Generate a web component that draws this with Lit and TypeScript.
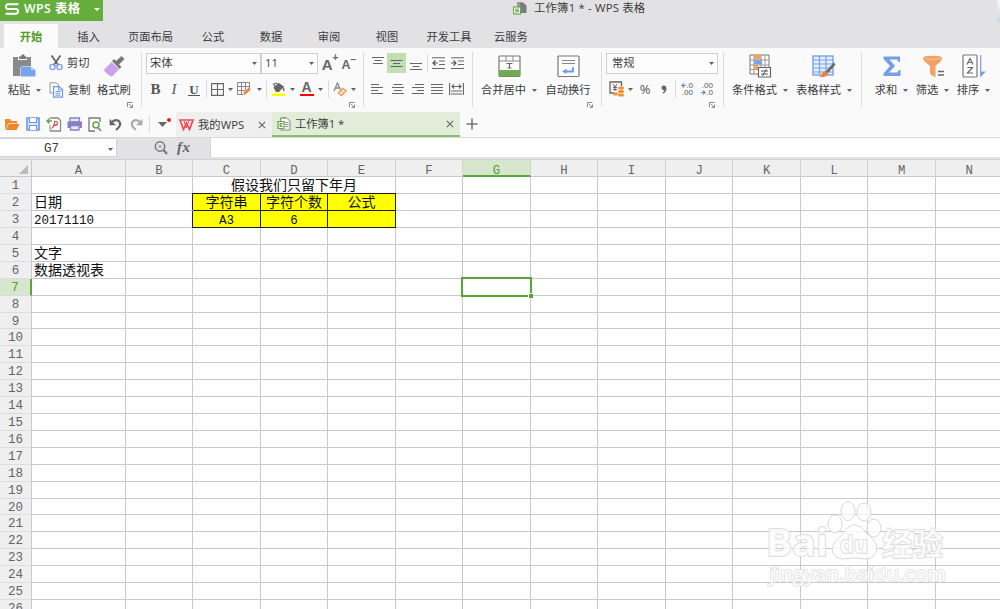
import { LitElement, html, svg, css, nothing } from "lit";
import { customElement } from "lit/decorators.js";
import { classMap } from "lit/directives/class-map.js";

type Part = { w: number; body?: unknown };

const gap = (w: number): Part => ({ w });
const part = (w: number, body: unknown): Part => ({ w, body });

const icon = (w: number, h: number, body: unknown) =>
  html`<svg width=${w} height=${h} viewBox="0 0 ${w} ${h}" fill="none">${body}</svg>`;

const caret = html`<svg width="5" height="3" viewBox="0 0 5 3"><path d="M0 0H5L2.5 3Z" fill="#606060" /></svg>`;
const launcher = html`<svg class="launcher" width="6" height="6" viewBox="0 0 6 6" fill="none"><path d="M.5 5V.5H5.5M2.5 5.5H5.5V2.5M2 2L5 5" stroke="#8a8a8a" /></svg>`;
const divider = html`<i class="divider"></i>`;

const lines = (w: number, rows: [number, number, number][], extra: unknown = nothing, h = 13) =>
  icon(w, h, svg`<path d=${rows.map(([x, y, l]) => `M${x} ${y}h${l}`).join("")} stroke="#666" stroke-width="1.1"/>${extra}`);

const paste = icon(25, 24, svg`<path d="M1 3H6V6H15V3H19V12H10L8 14V22H1Z" fill="#8a8a8a"/><path d="M7 2.5H9L10 .5H12L13 2.5H14.5V5H7Z" fill="#777"/><path d="M8.500 12.500H18L23.500 16V22.500H8.500Z" fill="#78a4ee"/><path d="M19 12.500L23.500 16H19Z" fill="#b4cef8"/>`);
const cut = icon(14, 16, svg`<path d="M2.500 .5L9.500 10.500M11.500 .5L4.500 10.500" stroke="#666" stroke-width="1.800"/><circle cx="3.500" cy="12" r="2.600" stroke="#78a0e4" stroke-width="1.400"/><circle cx="10.500" cy="12" r="2.600" stroke="#78a0e4" stroke-width="1.400"/>`);
const copy = icon(15, 16, svg`<path d="M4 11H1V.8H7.500L9.500 3V4" stroke="#999"/><path d="M4.600 4.600H10L13.500 7.500V15.200H4.600Z" fill="#fff" stroke="#6d98e3" stroke-width="1.200"/><path d="M9.500 5V8H13M6.500 9.500H11.500M6.500 11.300H11.500M6.500 13.200H11.500" stroke="#6d98e3"/>`);
const brush = icon(23, 23, svg`<path d="M9 6L11 4L13 6L18.500 1L21.500 4L16 9.500L18.500 12L16.500 14Z" fill="#777"/><path d="M8.500 7L16 14.300L9 21.500C6 21 3 18 .8 15Z" fill="#caa1ef"/>`);
const bordersIcon = icon(13, 13, svg`<path d="M.6.6H12.400V12.400H.6ZM6.500 1V12M1 6.500H12" stroke="#666" stroke-width="1.100"/>`);
const tablePen = icon(14, 14, svg`<path d="M.5.5H12.500V6M.5.5V12.500H6M.5 4.500H12.500M.5 8.500H8M4.500.5V12.500M8.500.5V8" stroke="#888"/><path d="M6 13L7 10L12 5.500L13.800 7.500L9 12Z" fill="#ee803a"/>`);
const bucket = icon(15, 15, svg`<path d="M2.500 5.500L7.500 .8L13 4.500L8 10H5Z" fill="#666"/><path d="M4 4.500L2.500 2L6 1" stroke="#666" stroke-width="1.200"/><path d="M12 4.500Q14.500 7.500 13 9.500Q11.500 8.500 11.500 5Z" fill="#666"/><path d="M.5 11.500H14.500V14H.5Z" fill="#ff0"/>`);
const fontColor = html`<span class="font-color">A</span>`;
const eraser = icon(14, 15, svg`<path d="M1 9L4.500 1L7.500 8M2.500 6H6" stroke="#888" stroke-width="1.300"/><path d="M5.500 11L10 6.500L13 9L8.500 13.500Z" stroke="#eea04d" stroke-width="1.500"/><path d="M8 8.500L11 11" stroke="#eea04d"/>`);

const vTop = lines(13, [[0, 1.5, 12], [2.5, 4.500, 7], [1, 7.500, 10]], nothing, 15);
const vMid = lines(13, [[0.5, 3.500, 12], [3, 6.500, 7], [0.500, 9.500, 12]]);
const vBot = lines(13, [[1, 7.500, 12], [3.500, 10.500, 7], [1, 13.500, 12]], nothing, 15);
const outdent = lines(13, [[0, .8, 13], [7, 4, 6], [7, 7.500, 6], [0, 11.500, 13]], svg`<path d="M1 6H6M3.500 3.500L1 6L3.500 8.500" stroke="#555" stroke-width="1.200"/>`);
const indent = lines(13, [[0, .8, 13], [7, 4, 6], [7, 7.500, 6], [0, 11.500, 13]], svg`<path d="M0 6H5M2.500 3.500L5 6L2.500 8.500" stroke="#555" stroke-width="1.200"/>`);
const hLeft = lines(12, [[0, 1.500, 8], [0, 4.500, 12], [0, 7.500, 7], [0, 10.500, 12]], nothing, 12);
const hCenter = lines(12, [[1.500, 1.500, 9], [0, 4.500, 12], [2, 7.500, 8], [0, 10.500, 12]], nothing, 12);
const hRight = lines(12, [[3, 1.500, 9], [0, 4.500, 12], [5, 7.500, 7], [0, 10.500, 12]], nothing, 12);
const hJust = lines(12, [[0, 1.500, 12], [0, 4.500, 12], [0, 7.500, 12], [0, 10.500, 12]], nothing, 12);
const hDist = lines(15, [[2, 8, 11], [2, 11, 11]], svg`<path d="M.6 0V12M14.400 0V12M3 3.500H12M5 1.500L3 3.500L5 5.500M10 1.500L12 3.500L10 5.500" stroke="#666" stroke-width="1.100"/>`, 12);

const mergeIcon = icon(23, 23, svg`<rect x="1" y="1" width="21" height="20.500" rx="1" fill="#fff" stroke="#777" stroke-width="1.200"/><path d="M1 6H22M8 1V6M15 1V6" stroke="#888"/><path d="M1 15H22V21.500H1Z" fill="#72a955"/><path d="M8.500 8.500H14.500M11.500 8.500V13M9.500 13H13.500" stroke="#666" stroke-width="1.200"/>`);
const wrapIcon = icon(23, 23, svg`<rect x="1" y="1" width="21" height="20.500" rx="1" fill="#fff" stroke="#777" stroke-width="1.200"/><path d="M5 5.500H18M5 8.500H18" stroke="#888"/><path d="M16 12V16.500H8" stroke="#6f9ceb" stroke-width="1.800"/><path d="M9.500 13.500V19L5 16.500Z" fill="#6f9ceb"/>`);
const currency = icon(16, 16, svg`<path d="M5 12H1V1H12.500V5" stroke="#666" stroke-width="1.300"/><path d="M4 3L6 6L8 3M6 6V10M4 6.500H8M4 8.500H8" stroke="#666"/><g fill="#f0932f"><rect x="9" y="5.500" width="6" height="3" rx="1.500"/><rect x="9" y="9" width="6" height="3" rx="1.500"/><rect x="9" y="12.500" width="6" height="3" rx="1.500"/><rect x="4" y="11.500" width="5" height="3" rx="1.500"/></g>`);
const comma = icon(6, 9, svg`<path d="M3 .5A2.300 2.300 0 1 0 3.500 5Q3.200 6.700 1.500 7.500L2 8.500Q5.500 7 5.500 3.200Q5.400 .6 3 .5Z" fill="#666"/>`);
const arrow = (left: boolean) => icon(5, 5, svg`<path d=${left ? "M5 2.5H1M3 .5L1 2.500L3 4.500" : "M0 2.500H4M2 .5L4 2.500L2 4.500"} stroke="#5b8fe6" stroke-width="1.200"/>`);
const condIcon = icon(23, 24, svg`<path d="M1 1H20V20H1Z" fill="#fff" stroke="#777"/><path d="M5 1V20M12 1V20M16 1V20M1 6H20M1 11H20M1 15.500H20" stroke="#999"/><path d="M5 1H12V5.500H5ZM5 11H9V15.500H5Z" fill="#f3a15c"/><path d="M5 6H13V10.500H5Z" fill="#78a4ee"/><path d="M9.500 13.500H21.500V23H9.500Z" fill="#fff" stroke="#666" stroke-width="1.200"/><path d="M12 17H19M12 20H19M17.500 14.800L13.500 22" stroke="#555"/>`);
const styleIcon = icon(24, 23, svg`<rect x="1" y="1" width="20" height="19" fill="#e7effd" stroke="#6e99e8" stroke-width="1.300"/><path d="M1 5H21M1 9H21M1 13H21M1 17H21M7.500 1V20M14 1V20" stroke="#76a0e9" stroke-width="1.200"/><path d="M22 7.500L14 16L16 18L23.500 9.500Z" fill="#666"/><path d="M13 16L16.500 18.500Q14 23 7 22Q10 21 10 18.500Q11 16 13 16Z" fill="#ee8038"/>`);
const sumIcon = icon(18, 22, svg`<path d="M.5 1.500H17V7H15.500L14 4.500H6.500L12 11L6 17.500H14.500L16 15H17.500V21H.5V18.500L7 11L.5 4Z" fill="#749fe8"/>`);
const filterIcon = icon(22, 23, svg`<path d="M1 3Q1 .8 10.500 .8Q20 .8 20 3L19 6L13.500 11V22Q9 21 8 18V11L2 6Z" fill="#f1a264"/><path d="M3 3.500Q10 5.500 18 3.500" stroke="#fac497"/><path d="M16 16.500H22M16 20H22" stroke="#666" stroke-width="1.300"/>`);
const sortIcon = icon(24, 24, svg`<rect x="1" y="1" width="14" height="22" rx="1" fill="#fff" stroke="#777" stroke-width="1.200"/><path d="M5 10.500L8 4.500L11 10.500M6 8.500H10M5.500 13.500H10.500L5.500 19H11" stroke="#666" stroke-width="1.200"/><path d="M18.700 1V22L22.500 18H18.700" fill="#749fe8" stroke="#749fe8" stroke-width="1.200"/>`);

const folder = icon(16, 14, svg`<path d="M1 12V2H6L7.500 4H13V6.500H4.500L1.500 12.500Z" fill="#ef8a30"/><path d="M4.500 7H15.500L12.500 13H1.500Z" fill="#f0862b"/><path d="M1.500 12.500L4.500 6.500H13.500" stroke="#fde0c2" stroke-width=".8"/>`);
const save = icon(14, 14, svg`<path d="M1 1H13V13H1Z" fill="#dce8fc" stroke="#6996e5" stroke-width="1.600"/><path d="M3.500 1V5.500H10.500V1M3.500 13V8.500H10.500V13" fill="#fff" stroke="#6996e5" stroke-width="1.200"/>`);
const pdf = icon(16, 15, svg`<path d="M4 1H12L14.500 3.500V14H4" fill="#fff" stroke="#888" stroke-width="1.300"/><path d="M4 8V14" stroke="#888"/><path d="M5.500 11.500Q9 9 8.500 4.500Q12 4 11.500 7Q10 9 7 8.500" stroke="#dc5556" stroke-width="1.300"/><path d="M1 4H6M3.500 1.500L1 4L3.500 6.500" stroke="#63a04d" stroke-width="1.400"/>`);
const printer = icon(16, 14, svg`<path d="M3 1H12.500V5H3ZM3.500 8.500H12V13H3.500Z" fill="#e9e7fb" stroke="#8580c6" stroke-width="1.300"/><path d="M.5 4.500H15V11H12.500V8H3V11H.5Z" fill="#8580c6"/>`);
const preview = icon(14, 15, svg`<path d="M12 5V1H1V14H7" fill="#fff" stroke="#777" stroke-width="1.300"/><circle cx="8" cy="8" r="3" fill="#fff" stroke="#66a052" stroke-width="1.500"/><path d="M10 10.500L13 14" stroke="#66a052" stroke-width="1.700"/>`);
const undo = icon(13, 13, svg`<path d="M2 5Q6 .8 9.800 3Q13.500 7 7 12" stroke="#666" stroke-width="2.200"/><path d="M.6 .8V7.200H7Z" fill="#666"/>`);
const redo = icon(13, 13, svg`<path d="M11 5Q7 .8 3.200 3Q-.5 7 6 12" stroke="#aaa" stroke-width="2.200"/><path d="M12.400 .8V7.200H6Z" fill="#aaa"/>`);
const close = icon(8, 8, svg`<path d="M.8.8L7.200 7.200M7.200.8L.8 7.200" stroke="#666" stroke-width="1.100"/>`);
const bookIcon = icon(14, 14, svg`<path d="M5 .8H9.500L13 4V13H3" fill="#f7f7f7" stroke="#888"/><path d="M3.500 4V1H9" stroke="#888"/><path d="M8 5.500H11.500M8 7.500H11.500M8 9.500H11.500" stroke="#999"/><path d="M1 4.500H7V11.500H1Z" fill="#fff" stroke="#62a342" stroke-width="1.200"/><path d="M5.500 6.500H3V9.500H5.500M3 8H5" stroke="#62a342"/>`);
const wpsW = icon(15, 12, svg`<path d="M1 1H14L10.500 10.500L7.500 4L4.500 10.500Z" stroke="#ea4b50" stroke-width="1.700"/><path d="M5 2L7.500 9M10 2L7 9" stroke="#ea4b50" stroke-width="1"/>`);
const logo = icon(14, 12, svg`<path d="M13.500 1.200H3Q1 1.200 1 3.500Q1 6 3 6H11Q13 6 13 8.300Q13 10.700 11 10.700H.5" stroke="#fff" stroke-width="1.900"/>`);
const docIcon = icon(15, 14, svg`<path d="M4 1H10V10H4Z" fill="#999"/><path d="M7 2H11.500L13.500 4V12H7Z" fill="#7d7d7d"/><path d="M11 1.500L14 4.500" stroke="#fff" stroke-width=".7"/><rect x=".5" y="6" width="7" height="7" fill="#fff" stroke="#68a94c" stroke-width="1.200"/><path d="M6 8H2.500V9.500H5.500V11H2" stroke="#68a94c"/>`);
const magnifier = icon(14, 14, svg`<circle cx="6" cy="5.500" r="4.700" stroke="#777" stroke-width="1.500"/><path d="M9.500 9L13 13" stroke="#777" stroke-width="2"/><path d="M4.500 4L7.500 7M7.500 4L4.500 7" stroke="#999"/>`);

const COLS = "ABCDEFGHIJKLMN".split("");
const ROWS = Array.from({ length: 26 }, (_, i) => i + 1);
const CELLS: Record<string, string> = {
  C1: "假设我们只留下年月",
  A2: "日期", C2: "字符串", D2: "字符个数", E2: "公式",
  A3: "20171110", C3: "A3", D3: "6",
  A5: "文字", A6: "数据透视表",
};

@customElement("sheet-grid")
class SheetGrid extends LitElement {
  static styles = css`
    :host { display: block; overflow: hidden; position: relative; }
    .grid {
      display: grid; width: 1004px; background: #fff;
      grid-template-columns: 32px 93.7px repeat(13, 67.52px);
      grid-template-rows: 17.3px; grid-auto-rows: 16.91px;
      font: 14px/19px "Liberation Mono", "Noto Sans CJK SC", monospace; color: #111;
    }
    .grid > div { box-sizing: border-box; border-right: 1px solid #c9c9cb; border-bottom: 1px solid #c9c9cb; white-space: nowrap; min-width: 0; }
    .grid > .head { background: #efeff0; color: #646464; text-align: center; font: 12.3px/19.5px "Liberation Mono", monospace; }
    .grid > .colhead { line-height: 22px; border-right-color: #d2d2d4; }
    .grid > .on { background: #d7e7ce; color: #4f9f2f; }
    .grid > .colhead.on { border-bottom: 2px solid #5ba53a; }
    .grid > .rowhead { border-bottom-color: #dcdcde; font-size: 12.5px; }
    .grid > .rowhead.on { border-right: 2px solid #5ba53a; }
    .corner { display: flex; justify-content: flex-end; align-items: flex-end; padding: 0 3px 2px; }
    .text { padding-left: 2px; }
    .num { font-size: 12.5px; line-height: 20px; }
    .center { text-align: center; }
    .grid > .title { grid-column: span 3; }
    .grid > .yellow { background: #ff0; border-color: #1d1d00; text-align: center; box-shadow: -1px 0 #1d1d00; }
    .grid > .yellow.first { box-shadow: -1px -1px #1d1d00, 0 -1px #1d1d00; }
    .grid > .selected { position: relative; border-color: transparent; overflow: visible; }
    .ring { position: absolute; inset: -2px -2px -2px -2px; border: 2px solid #57a532; box-sizing: border-box; }
    .handle { position: absolute; right: -3px; bottom: -4px; width: 4px; height: 4px; background: #57a532; border: 1px solid #fff; border-right: 0; }
    .mark { position: absolute; left: 762px; top: 338px; }
    .mark text { fill: #fff; fill-opacity: .8; stroke: #dedede; stroke-width: 1.800px; stroke-linejoin: round; paint-order: stroke; font-weight: bold; }
    .latin { font-family: "Open Sans", sans-serif; }
    .mark .url { font-weight: 600; stroke-width: 1.400px; }
    .cjk { font-family: "Noto Sans CJK SC", sans-serif; font-weight: 900; }
  `;

  cell(col: string, row: number) {
    const key = col + row;
    if (row === 1 && (col === "D" || col === "E")) return nothing;
    const value = CELLS[key] ?? "";
    const yellow = (row === 2 || row === 3) && "CDE".includes(col);
    const selected = key === "G7";
    return html`<div class=${classMap({
      text: col === "A", num: /^[A-Z0-9]+$/.test(value), yellow, first: yellow && row === 2,
      title: key === "C1", center: key === "C1", selected,
    })}>${value}${selected ? html`<span class="ring"></span><span class="handle"></span>` : nothing}</div>`;
  }

  render() {
    return html`
      <div class="grid">
        <div class="head corner"><svg width="9" height="9" viewBox="0 0 9 9"><path d="M9 0V9H0Z" fill="#bcbcbe" /></svg></div>
        ${COLS.map((c) => html`<div class=${classMap({ head: true, colhead: true, on: c === "G" })}>${c}</div>`)}
        ${ROWS.map((r) => html`<div class=${classMap({ head: true, rowhead: true, on: r === 7 })}>${r}</div>${COLS.map((c) => this.cell(c, r))}`)}
      </div>
      <svg class="mark" width="190" height="92" viewBox="0 0 190 92">
        <text class="latin" x="4" y="58" font-size="38" textLength="62" lengthAdjust="spacingAndGlyphs">Bai</text>
        <g fill="#fff" fill-opacity=".8" stroke="#d9d9d9" stroke-width="1">
          <ellipse cx="73" cy="26" rx="7" ry="9" /><ellipse cx="86" cy="13" rx="7" ry="9.500" />
          <ellipse cx="102" cy="14" rx="7" ry="9" /><ellipse cx="112" cy="30" rx="7" ry="9" />
          <path d="M92 27Q99 27 104 35Q115 43 115 51Q113 61 103 61L92 60L80 61Q70 59 70 51Q71 44 80 37Q86 27 92 27Z" />
        </g>
        <text class="latin" x="78" y="55" font-size="24" textLength="28" lengthAdjust="spacingAndGlyphs">du</text>
        <text class="cjk" x="120" y="57" font-size="31" textLength="61" lengthAdjust="spacingAndGlyphs">经验</text>
        <text class="latin url" x="7" y="83" font-size="19" textLength="177" lengthAdjust="spacingAndGlyphs">jingyan.baidu.com</text>
      </svg>`;
  }
}

@customElement("app-root")
class AppRoot extends LitElement {
  static styles = css`
    :host { display: flex; flex-direction: column; width: 1000px; height: 609px; overflow: hidden; background: #e2e2e4;
      font: 11.25px/16px "Open Sans", "Noto Sans CJK SC", sans-serif; color: #3c3c3c; }
    * { box-sizing: border-box; }
    svg { display: block; flex: none; }
    .title { height: 24px; display: flex; align-items: flex-start; flex: none; }
    .brand { width: 103px; height: 21px; background: #65ad3c; display: flex; align-items: center; padding: 0 0 4px 5px; color: #fff; font-weight: 600; font-size: 12.3px; }
    .brand span { margin-left: 5px; width: 66px; white-space: nowrap; letter-spacing: .45px; }
    .brand .drop { border: 3px solid transparent; border-top-color: #fff; border-bottom: 0; margin-left: 4px; margin-top: 1px; }
    .doc { display: flex; align-items: center; gap: 6px; margin-left: 410px; height: 16px; font-size: 11.4px; letter-spacing: .17px; white-space: nowrap; }
    .edge { margin-left: auto; width: 3px; height: 22px; background: linear-gradient(#f3f7f8, #c9dbe0); }
    .tabs { height: 24px; display: flex; flex: none; white-space: nowrap; }
    .tab { display: flex; align-items: center; justify-content: center; padding-top: 2px; flex: none; }
    .tab.on { background: #fbfbfb; color: #4f9a2a; font-weight: bold; }
    .ribbon { height: 63px; display: flex; background: #fafafa; flex: none; white-space: nowrap; overflow: hidden; }
    .group { position: relative; flex: none; padding-top: 4px; }
    .group + .group::before { content: ""; position: absolute; left: 0; top: 4px; height: 55px; border-left: 1px solid #dedede; }
    .row { display: flex; align-items: center; height: 22px; }
    .row + .row { margin-top: 4px; }
    .item { flex: none; display: flex; align-items: center; justify-content: center; height: 22px; }
    .bigs { display: flex; padding-top: 2px; }
    .big { display: flex; flex-direction: column; align-items: center; flex: none; }
    .big .pic { height: 24px; display: flex; align-items: center; }
    .big .cap { height: 24px; display: flex; align-items: center; gap: 6px; }
    .stack { display: flex; flex-direction: column; gap: 5px; }
    .stack div { display: flex; align-items: center; gap: 4px; height: 22px; }
    .launcher { position: absolute; right: 8px; bottom: 3px; }
    .divider { width: 1px; height: 18px; background: #dcdcdc; }
    .select { width: 100%; height: 21px; border: 1px solid #cfcfcf; background: #fdfdfd; display: flex; align-items: center; justify-content: space-between; padding: 0 3px; }
    .wide { padding-left: 5px; }
    .bold { font: bold 15px "Liberation Serif", serif; color: #555; }
    .italic { font: italic 15px "Liberation Serif", serif; color: #555; }
    .under { font: bold 13px/13px "Liberation Serif", serif; color: #555; border-bottom: 1px solid #555; height: 13px; padding: 0 1px; }
    .letter { font: bold 15px "Liberation Sans", sans-serif; color: #666; display: flex; padding-top: 2px; }
    .letter.small { font-size: 12.5px; padding-top: 3px; }
    .letter sup { font-size: 10px; line-height: 6px; margin: -1px 0 0 0; }
    .font-color { font: bold 14px/11px "Liberation Sans", sans-serif; color: #666; border-bottom: 2.500px solid #f00; width: 14px; height: 14px; text-align: center; }
    .active { background: #c2dfb4; width: 19px; height: 20px; display: flex; align-items: center; justify-content: center; }
    .percent { font-size: 13px; color: #555; }
    .dec { font: 8px/7.500px "Liberation Sans", sans-serif; color: #555; }
    .dec div { display: flex; align-items: center; justify-content: flex-end; }
    .files { height: 26px; display: flex; align-items: center; background: #fafafa; flex: none; white-space: nowrap; }
    .file { height: 25px; display: flex; align-items: center; align-self: flex-start; flex: none; }
    .home { width: 96px; background: #efeff0; padding-left: 3px; margin-top: 1px; }
    .home span { margin-left: 4px; width: 60px; letter-spacing: .1px; }
    .book { width: 188px; background: #e1edd9; border-bottom: 2px solid #8bbd70; padding: 0 6px 0 5px; margin-top: 1px; }
    .book span { margin-left: 4px; flex: 1; }
    .menu { position: relative; display: flex; }
    .dot { position: absolute; right: -4px; top: -4px; width: 4px; height: 4px; border-radius: 50%; background: #f02020; }
    .formula { height: 23px; display: flex; background: #e2e2e4; border-top: 1px solid #d9d9db; padding-bottom: 2px; border-bottom: 1px solid #cfcfd1; flex: none; }
    .name { width: 117px; background: #fff; border: 1px solid #d4d4d6; border-left: 0; display: flex; align-items: center; padding: 3px 3px 0 44px; justify-content: space-between; font: 12.5px "Liberation Mono", monospace; }
    .tools { width: 93px; display: flex; align-items: center; padding-left: 37px; gap: 9px; }
    .fx { font: italic bold 15px "Liberation Serif", serif; color: #666; letter-spacing: .5px; }
    .input { flex: 1; background: #fff; border-left: 1px solid #d4d4d6; }
    sheet-grid { flex: 1; min-height: 0; }
  `;

  row(parts: Part[]) {
    return html`<div class="row">${parts.map((p) => html`<div class="item" style="width:${p.w}px">${p.body ?? nothing}</div>`)}</div>`;
  }

  big(w: number, pic: unknown, label: string, drop = true) {
    return html`<div class="big" style="width:${w}px"><div class="pic">${pic}</div><div class="cap">${label}${drop ? caret : nothing}</div></div>`;
  }

  render() {
    const tabs: [string, number][] = [["插入", 61], ["页面布局", 63], ["公式", 62], ["数据", 54], ["审阅", 62], ["视图", 54], ["开发工具", 70], ["云服务", 54]];
    const select = (t: string, wide = false) => html`<div class=${classMap({ select: true, wide })}><span>${t}</span>${caret}</div>`;
    return html`
      <div class="title">
        <div class="brand">${logo}<span>WPS 表格</span><i class="drop"></i></div>
        <div class="doc">${docIcon}<span>工作簿1 * - WPS 表格</span></div>
        <div class="edge"></div>
      </div>
      <div class="tabs">
        <div class="tab" style="width:4px"></div>
        <div class="tab on" style="width:54px">开始</div>
        ${tabs.map(([t, w]) => html`<div class="tab" style="width:${w}px">${t}</div>`)}
      </div>
      <div class="ribbon">
        <div class="group" style="width:141px">
          <div class="bigs">
            ${this.big(49, paste, "粘贴")}
            <div class="stack" style="width:44px; margin-top:-2px"><div>${cut}剪切</div><div>${copy}复制</div></div>
            ${this.big(42, brush, "格式刷", false)}
          </div>${launcher}
        </div>
        <div class="group" style="width:222px">
          ${this.row([gap(5), part(115, select("宋体")), part(57, select("11")), gap(4),
            part(16, html`<span class="letter">A<sup>+</sup></span>`), gap(3), part(16, html`<span class="letter small">A<sup>−</sup></span>`)])}
          ${this.row([gap(7), part(15, html`<span class="bold">B</span>`), gap(3), part(16, html`<span class="italic">I</span>`), gap(3), part(18, html`<span class="under">U</span>`),
            gap(2), part(3, divider), gap(2), part(15, bordersIcon), gap(3), part(5, caret), gap(4), part(14, tablePen), gap(6), part(5, caret), gap(3), part(3, divider), gap(3),
            part(15, bucket), gap(4), part(5, caret), gap(4), part(15, fontColor), gap(4), part(5, caret), gap(4), part(3, divider), gap(3), part(14, eraser), gap(4), part(5, caret)])}
          ${launcher}
        </div>
        <div class="group" style="width:109px">
          ${this.row([gap(8), part(14, vTop), gap(2), part(19, html`<span class="active">${vMid}</span>`), gap(3), part(13, vBot), gap(4), part(3, divider), gap(3), part(13, outdent), gap(6), part(13, indent)])}
          ${this.row([gap(8), part(12, hLeft), gap(9), part(12, hCenter), gap(8), part(12, hRight), gap(7), part(12, hJust), gap(6), part(15, hDist)])}
        </div>
        <div class="group" style="width:129px">
          <div class="bigs"><div style="width:6px"></div>${this.big(62, mergeIcon, "合并居中")}${this.big(56, wrapIcon, "自动换行", false)}</div>${launcher}
        </div>
        <div class="group" style="width:122px">
          ${this.row([gap(5), part(112, select("常规", true))])}
          ${this.row([gap(8), part(16, currency), gap(3), part(5, caret), gap(5), part(14, html`<span class="percent">%</span>`), gap(6), part(11, comma), gap(5), part(3, divider), gap(3),
            part(14, html`<div class="dec"><div>${arrow(true)}.0</div><div>.00</div></div>`), gap(6), part(14, html`<div class="dec"><div>.00</div><div>${arrow(false)}.0</div></div>`)])}
          ${launcher}
        </div>
        <div class="group" style="width:138px">
          <div class="bigs"><div style="width:5px"></div>${this.big(64, condIcon, "条件格式")}${this.big(64, styleIcon, "表格样式")}</div>
        </div>
        <div class="group" style="width:139px">
          <div class="bigs"><div style="width:10px"></div>${this.big(41, sumIcon, "求和")}${this.big(41, filterIcon, "筛选")}${this.big(41, sortIcon, "排序")}</div>
        </div>
      </div>
      <div class="files">
        ${[gap(4), part(16, folder), gap(6), part(14, save), gap(6), part(16, pdf), gap(5), part(15, printer), gap(6), part(14, preview), gap(6), part(14, undo), gap(7), part(14, redo), gap(5), part(3, divider), gap(6),
          part(10, html`<span class="menu"><svg width="9" height="5" viewBox="0 0 9 5"><path d="M0 0H9L4.500 5Z" fill="#666" /></svg><i class="dot"></i></span>`), gap(9)]
          .map((p) => html`<div class="item" style="width:${p.w}px">${p.body ?? nothing}</div>`)}
        <div class="file home">${wpsW}<span>我的WPS</span>${close}</div>
        <div class="file book">${bookIcon}<span>工作簿1 *</span>${close}</div>
        <div class="item" style="width:24px">${icon(12, 12, svg`<path d="M6 .5V11.500M.5 6H11.500" stroke="#777" stroke-width="1.600"/>`)}</div>
      </div>
      <div class="formula">
        <div class="name">G7${caret}</div>
        <div class="tools">${magnifier}<span class="fx">fx</span></div>
        <div class="input"></div>
      </div>
      <sheet-grid></sheet-grid>`;
  }
}
